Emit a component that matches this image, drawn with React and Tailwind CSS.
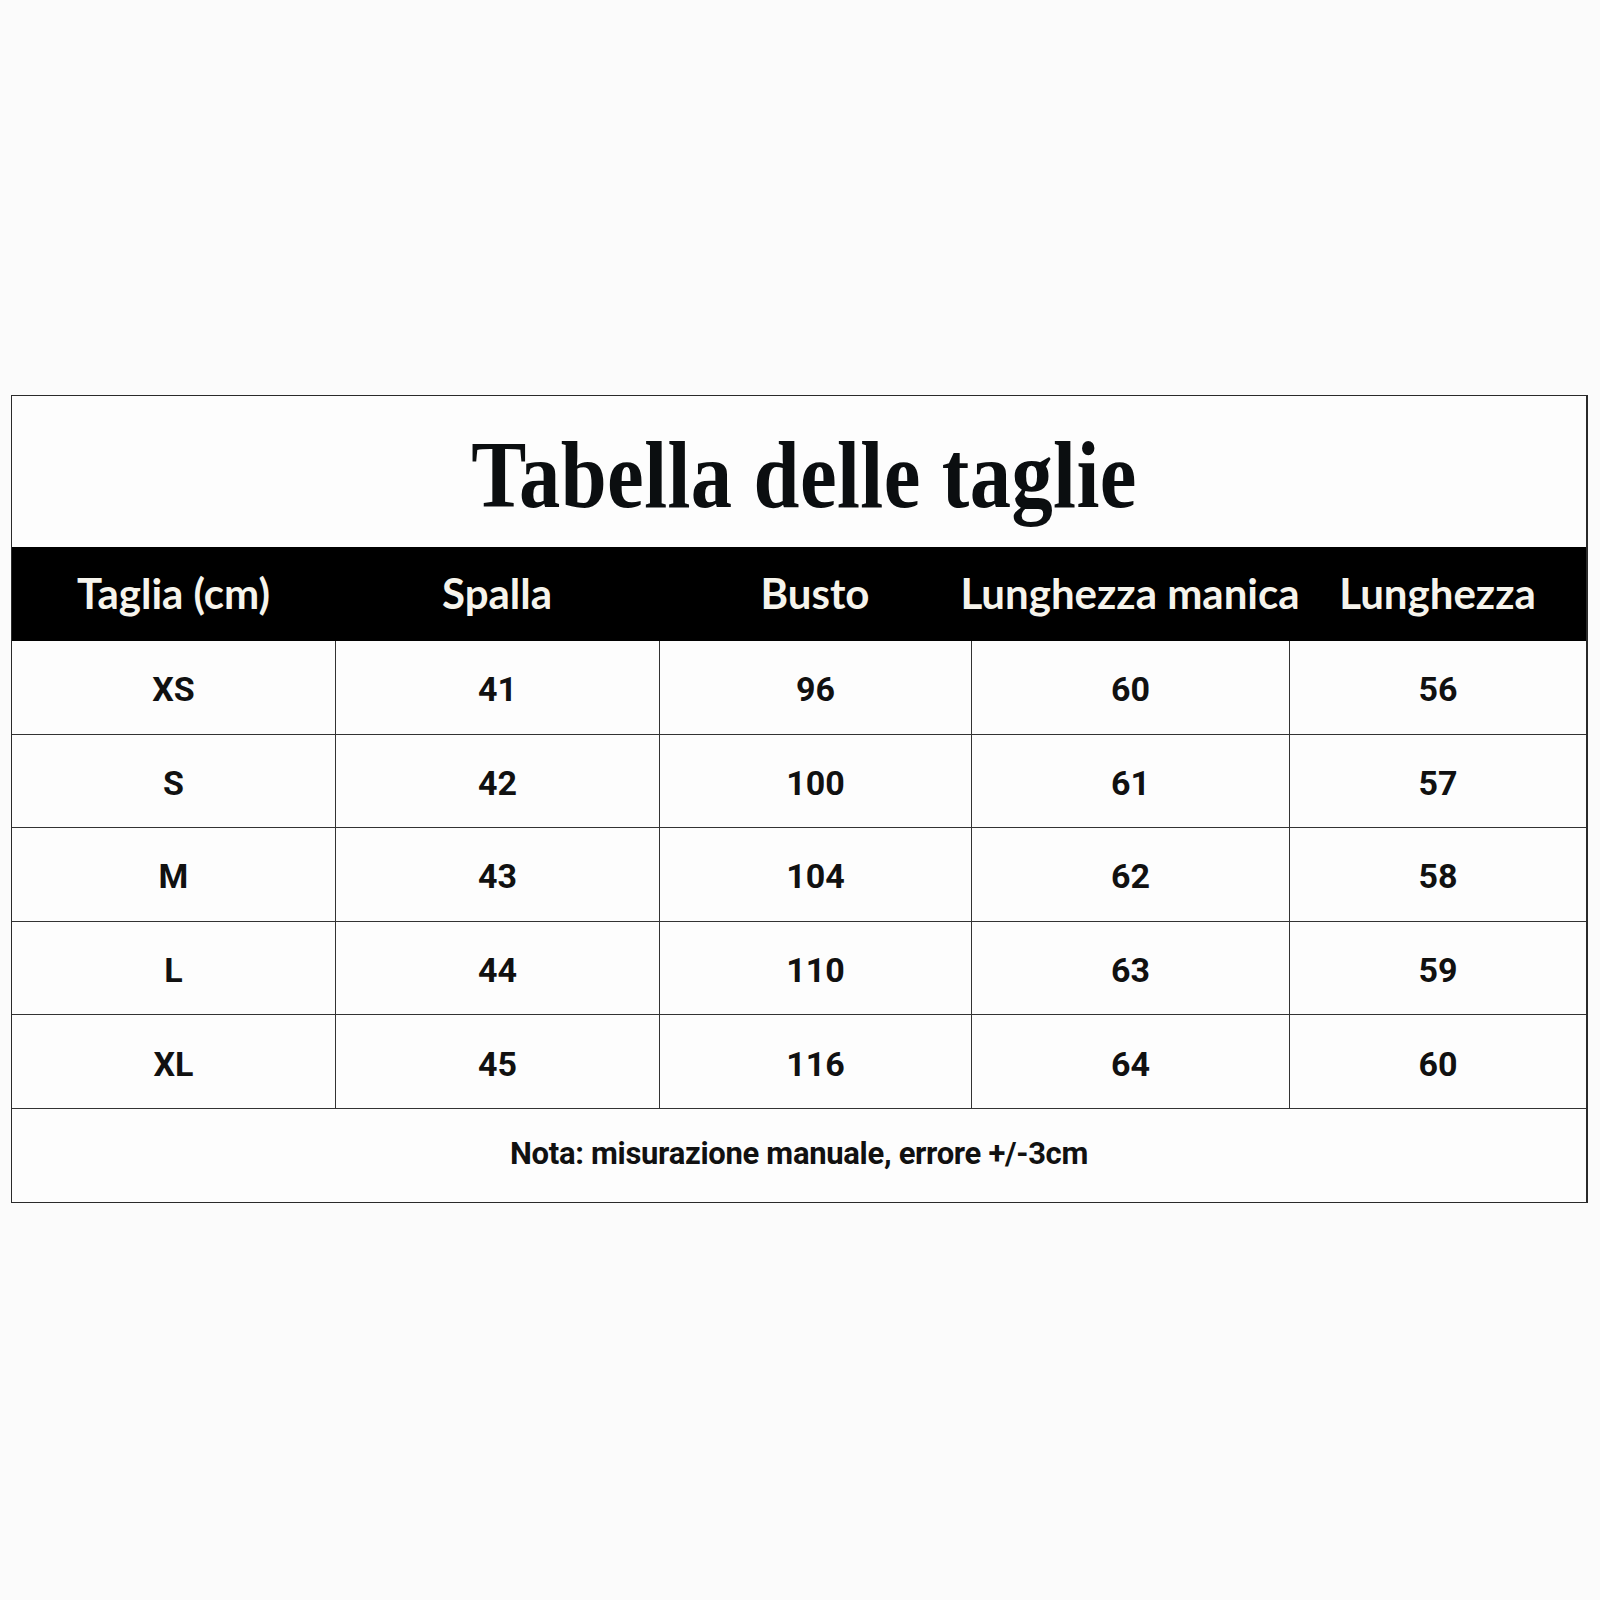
const headers = ["Taglia (cm)", "Spalla", "Busto", "Lunghezza manica", "Lunghezza"];

const rows = [
  ["XS", "41", "96", "60", "56"],
  ["S", "42", "100", "61", "57"],
  ["M", "43", "104", "62", "58"],
  ["L", "44", "110", "63", "59"],
  ["XL", "45", "116", "64", "60"],
];

const cols = "grid grid-cols-[323px_324px_312px_318px_1fr]";

export default function App() {
  return (
    <div className="min-h-screen w-[1600px] bg-[#fbfbfb] pt-[395px]">
      <div className="ml-[11px] w-[1577px] border border-r-2 border-[#2a2a2a] bg-[#fdfdfd]">
        <div className="h-[151px] flex items-center justify-center pt-[6px] pl-[10px]">
          <h1 className="font-['Liberation_Serif',serif] font-bold text-[96px] leading-none tracking-[0.005em] text-[#0b0e10] scale-x-[0.86]">
            Tabella delle taglie
          </h1>
        </div>

        <div className={`${cols} h-[94px] bg-black`}>
          {headers.map((h) => (
            <div
              key={h}
              className="flex items-center justify-center pb-[2px] font-['Lato',sans-serif] font-bold text-[42px] text-[#f6f4ec] whitespace-nowrap"
            >
              {h}
            </div>
          ))}
        </div>

        {rows.map((r) => (
          <div key={r[0]} className={`${cols} h-[93.6px] border-b border-[#333]`}>
            {r.map((v, i) => (
              <div
                key={i}
                className={`flex items-center justify-center pt-[5px] font-['Roboto',sans-serif] font-bold text-[34px] text-[#111] ${
                  i > 0 ? "border-l border-[#333]" : ""
                }`}
              >
                {v}
              </div>
            ))}
          </div>
        ))}

        <div className="h-[93px] flex items-center justify-center pb-[2px]">
          <span className="font-['Roboto',sans-serif] font-bold text-[31px] tracking-[-0.01em] text-[#111]">
            Nota: misurazione manuale, errore +/-3cm
          </span>
        </div>
      </div>
    </div>
  );
}
